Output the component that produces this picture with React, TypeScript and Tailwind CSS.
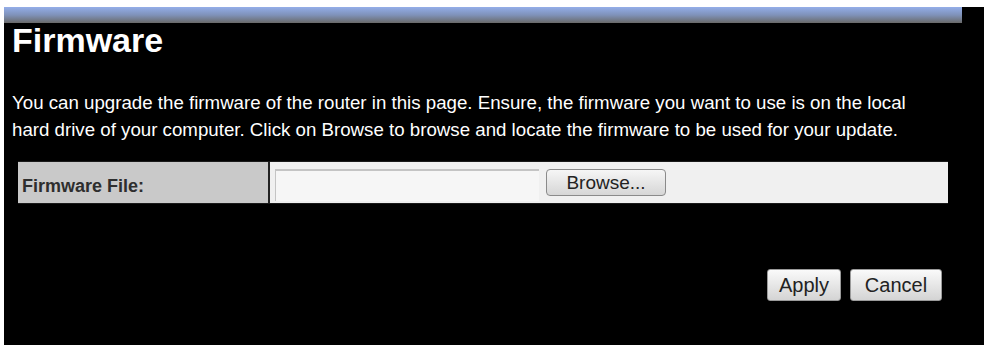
export default function App() {
  return (
    <div className="w-[984px] h-[349px] bg-white pt-[7px] pl-[4px] overflow-hidden font-['Liberation_Sans',Arial,sans-serif]">
      <div className="h-[338px] bg-black">
        <div className="w-[958px] h-[16px] bg-gradient-to-b from-[#94aee9] via-[#7f92b9] to-[#6a6a6a]" />
        <h1 className="pl-[8px] text-[34px] leading-[34px] font-bold text-white">Firmware</h1>
        <p className="mt-[32px] pl-[8px] text-[18.7px] leading-[27px] text-white whitespace-nowrap">
          You can upgrade the firmware of the router in this page. Ensure, the firmware you want to use is on the local
          <br />
          hard drive of your computer. Click on Browse to browse and locate the firmware to be used for your update.
        </p>

        <div className="mt-[18px] ml-[14px] w-[930px] h-[43px] flex border-y border-[#1a1a1a]">
          <div className="w-[252px] bg-[#c9c9c9] flex items-center pl-[4px] pt-[8px] border-r-2 border-[#222]">
            <span className="text-[18px] font-bold text-[#2e2e2e]">Firmware File:</span>
          </div>
          <div className="flex-1 bg-[#f0f0f0] flex items-center pl-[5px] gap-[7px]">
            <div className="w-[264px] h-[32px] mt-[4px] bg-[#f6f6f6] border-t-2 border-l border-[#c4c4c4]" />
            <button className="w-[120px] h-[27px] rounded-[4px] border border-[#8a8a8a] bg-gradient-to-b from-[#f6f6f6] to-[#d6d6d6] text-[19px] text-[#222] leading-none">
              Browse...
            </button>
          </div>
        </div>

        <div className="mt-[65px] flex justify-end gap-[9px] pr-[42px]">
          <button className="w-[74px] h-[32px] rounded-[3px] border border-[#9a9a9a] bg-gradient-to-b from-[#fafafa] to-[#d4d4d4] text-[20px] text-[#222] leading-none">
            Apply
          </button>
          <button className="w-[92px] h-[32px] rounded-[3px] border border-[#9a9a9a] bg-gradient-to-b from-[#fafafa] to-[#d4d4d4] text-[20px] text-[#222] leading-none">
            Cancel
          </button>
        </div>
      </div>
    </div>
  );
}
